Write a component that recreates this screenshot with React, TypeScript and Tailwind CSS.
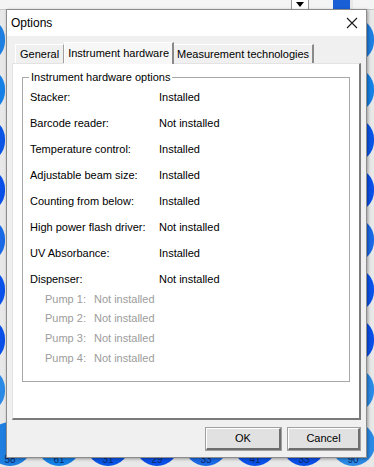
import React from 'react';

const wells = [58, 61, 31, 29, 33, 41, 33, 90];
const wellColors = ['#1f7fe0', '#1580e6', '#0a55e6', '#0a4fe8', '#1a6ae6', '#0a52ea', '#0a4fe8', '#2a8ae6'];

const rows: [string, string][] = [
  ['Stacker:', 'Installed'],
  ['Barcode reader:', 'Not installed'],
  ['Temperature control:', 'Installed'],
  ['Adjustable beam size:', 'Installed'],
  ['Counting from below:', 'Installed'],
  ['High power flash driver:', 'Not installed'],
  ['UV Absorbance:', 'Installed'],
  ['Dispenser:', 'Not installed'],
];

const pumps = ['Pump 1:', 'Pump 2:', 'Pump 3:', 'Pump 4:'];

const Well: React.FC<{ color: string; label?: number }> = ({ color, label }) => (
  <div
    className="w-[44px] h-[44px] rounded-full flex items-end justify-center pb-[1px] text-[10px] leading-[10px] text-[#0b2a6b]"
    style={{ backgroundColor: color }}
  >
    {label}
  </div>
);

export default function App() {
  return (
    <div
      className="relative w-[374px] h-[467px] overflow-hidden bg-[#e8e8e8] text-[11px] text-black"
      style={{ fontFamily: '"Liberation Sans", Arial, sans-serif' }}
    >
      {/* background app: toolbar */}
      <div className="h-[10px] bg-[#f4f4f4] border-b border-[#c8c8c8] flex">
        <div className="ml-[291px] w-[18px] h-[10px] bg-white border-x border-[#9a9a9a] flex items-start justify-center pt-[2px]">
          <div className="w-0 h-0 border-x-[4px] border-x-transparent border-t-[5px] border-t-black" />
        </div>
        <div className="ml-[24px] w-[20px] h-[10px] bg-[#1a5fd6] border-r-[3px] border-[#e8e8e8]" />
      </div>

      {/* background app: plate wells */}
      <div className="flex flex-col gap-[6px] pt-[8px] -ml-[36px]">
        {[0, 1, 2, 3, 4, 5, 6, 7].map((r) => (
          <div key={r} className="flex gap-[5px]">
            {wells.concat([0]).map((w, i) => (
              <Well key={i} color={wellColors[(i + r) % wellColors.length]} />
            ))}
          </div>
        ))}
      </div>
      <div className="absolute left-[-12px] top-[422px] flex gap-[5px]">
        {wells.map((w, i) => (
          <Well key={i} color={wellColors[i]} label={w} />
        ))}
      </div>

      {/* dialog window */}
      <div className="absolute left-[6px] top-[9px] w-[361px] h-[449px] bg-[#f0f0f0] border border-[#8c8c8c] shadow-[1px_1px_3px_rgba(0,0,0,0.35)] flex flex-col">
        <div className="h-[26px] bg-white flex items-center justify-between pl-[4px] pr-[8px]">
          <span className="text-[12px]">Options</span>
          <svg width="12" height="12" viewBox="0 0 12 12">
            <path d="M1 1 L11 11 M11 1 L1 11" stroke="#1a1a1a" strokeWidth="1.1" />
          </svg>
        </div>

        <div className="flex flex-col px-[5px] pt-[5px] flex-1">
          {/* tabs */}
          <div className="flex items-end h-[22px] pl-[3px]">
            <div className="h-[19px] px-[4px] flex items-center bg-[#f0f0f0] border-t border-l border-white border-r border-r-[#a0a0a0]">
              General
            </div>
            <div className="h-[22px] px-[3px] flex items-center bg-[#f7f7f7] border-t border-l border-white border-r-2 border-r-[#8a8a8a] -mb-[1px] relative z-10">
              Instrument hardware
            </div>
            <div className="h-[19px] px-[3px] flex items-center bg-[#f0f0f0] border-t border-white border-r-2 border-r-[#8a8a8a]">
              Measurement technologies
            </div>
          </div>

          {/* tab panel */}
          <div className="h-[357px] bg-white border-t border-l border-[#e3e3e3] border-r-2 border-b-2 border-r-[#7a7a7a] border-b-[#7a7a7a] px-[9px] pt-[13px]">
            <div className="relative h-[305px] border border-[#a8a8a8] pl-[7px] pt-[6px]">
              <span className="absolute left-[6px] -top-[8px] bg-white px-[2px] leading-[14px]">
                Instrument hardware options
              </span>
              <div className="flex flex-col">
                {rows.map(([k, v]) => (
                  <div key={k} className="flex h-[26px] items-center">
                    <span className="w-[129px]">{k}</span>
                    <span>{v}</span>
                  </div>
                ))}
                <div className="flex flex-col -mt-[3px] text-[#9c9c9c]">
                  {pumps.map((p) => (
                    <div key={p} className="flex h-[19.7px] items-center pl-[15px]">
                      <span className="w-[49px]">{p}</span>
                      <span>Not installed</span>
                    </div>
                  ))}
                </div>
              </div>
            </div>
          </div>

          {/* buttons */}
          <div className="flex justify-end gap-[7px] mt-[8px] pr-[1px]">
            <button className="w-[75px] h-[22px] bg-[#e1e1e1] border-t border-l border-white border-r-2 border-b-2 border-r-[#6e6e6e] border-b-[#6e6e6e] outline outline-1 outline-[#a0a0a0]">
              OK
            </button>
            <button className="w-[72px] h-[22px] bg-[#e1e1e1] border-t border-l border-white border-r-2 border-b-2 border-r-[#6e6e6e] border-b-[#6e6e6e] outline outline-1 outline-[#a0a0a0]">
              Cancel
            </button>
          </div>
        </div>
      </div>
    </div>
  );
}
